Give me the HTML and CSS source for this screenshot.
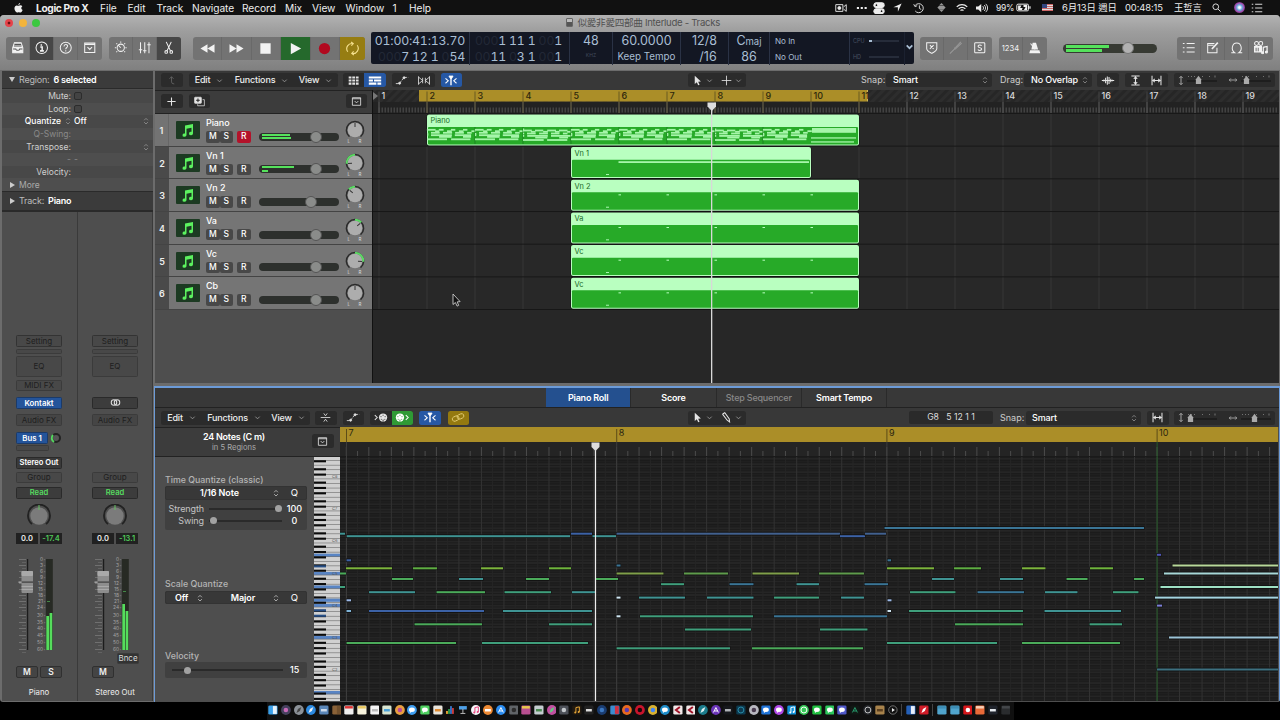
FILE: index.html
```html
<!DOCTYPE html>
<html lang="en">
<head>
  <meta charset="UTF-8">
  <meta name="viewport" content="width=device-width, initial-scale=1.0">
  <title>似愛非愛四部曲 Interlude - Tracks</title>
  <link rel="stylesheet" href="styles.css">
</head>
<body>

<!-- Icon sprite -->
<svg class="sprite" aria-hidden="true">
  <symbol id="i-apple" viewBox="0 0 14 16"><path fill="currentColor" d="M9.6 0c.1 1.500-1.200 3.200-2.800 3.300C6.600 1.800 8.100.2 9.600 0zM7.200 4.500C8 4.500 8.900 3.700 10.200 3.700c1.100 0 2.200.6 2.900 1.500-2.500 1.500-2.100 5 .5 6-.6 1.700-2 4.100-3.400 4.100-1 0-1.500-.7-2.800-.7s-1.800.7-2.800.7C2.600 15.300.5 11.500.5 8.500c0-3 1.900-4.700 3.800-4.700 1.200 0 2.200.7 2.900.7z"/></symbol>
  <symbol id="i-chev" viewBox="0 0 8 8"><path d="M1.500 3 4 5.500 6.500 3"/></symbol>
  <symbol id="i-updown" viewBox="0 0 8 10"><path d="M1.500 4 4 1.500 6.500 4M1.500 6.500 4 9l2.500-2.500"/></symbol>
  <symbol id="i-library" viewBox="0 0 16 16"><path fill="currentColor" d="M4 2h8l2 6v6H2V8z"/><path stroke="#555" d="M4 4h8M3.500 6h9M2.500 9.500h3.200c.5 2 4.100 2 4.600 0h3.200"/></symbol>
  <symbol id="i-info" viewBox="0 0 16 16"><circle cx="8" cy="8" r="6.800"/><path stroke-width="1.800" d="M6.300 7H8.500v4.500M6 11.700h4.500M7.500 3.800v1.700"/></symbol>
  <symbol id="i-help" viewBox="0 0 16 16"><circle cx="8" cy="8" r="6.500"/><path d="M5.900 6.500c0-3 4.500-2.900 4.300-.3C10 7.800 8 7.700 8 9.700M8 11v1.300"/></symbol>
  <symbol id="i-down" viewBox="0 0 16 16"><path d="M2 2.500h12v11H2zM2 4h12M5.300 7.300 8 10l2.700-2.700"/></symbol>
  <symbol id="i-dial" viewBox="0 0 16 16"><circle cx="8" cy="8" r="4.300"/><path d="m8 8-3-3M8 .5v1.500M1 8h1.500M13.500 8H15M2.800 2.800l1 1M13.200 2.800l-1 1M2.800 13.200l1-1M13.200 13.200l-1-1"/></symbol>
  <symbol id="i-mixer" viewBox="0 0 16 16"><path d="M3 1.500v13M8 1.500v13M13 1.500v13M1 10.500h4M6 11.500h4M11 4.500h4"/></symbol>
  <symbol id="i-cut" viewBox="0 0 16 16"><path d="M5 1l5 10.500M11 1 6 11.500"/><circle cx="5" cy="13" r="1.600"/><circle cx="11" cy="13" r="1.600"/></symbol>
  <symbol id="i-rew" viewBox="0 0 16 16"><path fill="currentColor" stroke="none" d="M8 3.500v9L.5 8zM15.500 3.500v9L8 8z"/></symbol>
  <symbol id="i-ff" viewBox="0 0 16 16"><path fill="currentColor" stroke="none" d="M.5 3.500v9L8 8zM8 3.500v9L15.500 8z"/></symbol>
  <symbol id="i-stop" viewBox="0 0 16 16"><path fill="currentColor" stroke="none" d="M2.500 2.500h11v11h-11z"/></symbol>
  <symbol id="i-play" viewBox="0 0 16 16"><path fill="currentColor" stroke="none" d="M3 2v12l11-6z"/></symbol>
  <symbol id="i-rec" viewBox="0 0 16 16"><circle cx="8" cy="8" r="6" fill="#b1091f" stroke="none"/></symbol>
  <symbol id="i-cycle" viewBox="0 0 16 16"><path d="M3 11.500A5.500 5.500 0 0 1 8.500 2.800M6.500 1l2.300 1.800L6.800 5M13 4.500a5.500 5.500 0 0 1-5.500 8.700M9.500 15l-2.300-1.800 2-2.200"/></symbol>
  <symbol id="i-shield" viewBox="0 0 16 16"><path d="M2 2h12v7c0 3-4 4.500-6 5.500C6 13.500 2 12 2 9zM5.800 5l4.400 4.400M10.200 5 5.800 9.400"/></symbol>
  <symbol id="i-fork" viewBox="0 0 16 16"><path d="M1 15l6-6M14 1 8.500 6.800c-1 1-2.500 1.200-1.500 2.200s1.500-.5 2.500-1.500L15 2.500"/></symbol>
  <symbol id="i-solo" viewBox="0 0 16 16"><rect x="2" y="2" width="12" height="12" rx="1"/><path d="M10.200 5.700c-1-1.500-4.200-1.200-4.200.5 0 2.300 4.300 1 4.300 3.400 0 1.900-3.600 2-4.500.4"/></symbol>
  <symbol id="i-metro" viewBox="0 0 16 16"><path fill="currentColor" stroke="none" d="M5.500 2h4L12 10H4zM2.500 11h11l1 3.500h-13z"/><path d="M8.500 10 3 3"/></symbol>
  <symbol id="i-list" viewBox="0 0 16 16"><path d="M5.500 3H15M5.500 8H15M5.500 13H15M1 3h2M1 8h2M1 13h2"/></symbol>
  <symbol id="i-note" viewBox="0 0 16 16"><path d="M13 8v6H2V3h8M2 5h7"/><path stroke-width="2" d="m7 9.500 7-7.500"/></symbol>
  <symbol id="i-loop" viewBox="0 0 16 16"><path d="M1.500 14h4.300C.5 10.500 2.500 2.300 8 2.300S15.500 10.500 10.200 14h4.300"/></symbol>
  <symbol id="i-media" viewBox="0 0 18 16"><circle cx="4" cy="3" r="2.300"/><circle cx="9" cy="3" r="2.300"/><path fill="currentColor" stroke="none" d="M1 6h9.500v7.500H1z"/><path stroke="#737373" d="M3.500 8v4M6 8v4"/><path stroke-width="1.500" d="M12 14V7.500l4.500-1V13"/><circle cx="11.200" cy="14" r="1.200" fill="currentColor"/><circle cx="15.700" cy="13" r="1.200" fill="currentColor"/></symbol>
  <symbol id="i-up" viewBox="0 0 16 16"><path d="M5 5.500 8 2.500l3 3M8 2.500V10q0 3 4 3"/></symbol>
  <symbol id="i-grid" viewBox="0 0 16 16"><path fill="currentColor" stroke="none" d="M1 2h4v3H1zM6.200 2h4v3h-4zM11.400 2h4v3h-4zM1 6.500h4v3H1zM6.200 6.500h4v3h-4zM11.400 6.500h4v3h-4zM1 11h4v3H1zM6.200 11h4v3h-4zM11.400 11h4v3h-4z"/></symbol>
  <symbol id="i-lanes" viewBox="0 0 20 16"><path fill="currentColor" stroke="none" d="M1 2h18v3H1zM1 6.500h6v3H1zM8.500 6.500H19v3H8.500zM1 11h11v3H1zM13.500 11H19v3h-5.500z"/></symbol>
  <symbol id="i-auto" viewBox="0 0 20 16"><path d="M1 12.500h5l7-9h6" stroke-dasharray="4 1.500"/><circle cx="6.500" cy="12" r="1.500" fill="currentColor"/><circle cx="13" cy="4" r="1.500" fill="currentColor"/></symbol>
  <symbol id="i-flex" viewBox="0 0 20 16"><path d="M2 2v12M18 2v12M2 3l6 5-6 5M18 3l-6 5 6 5M8 4v8M12 4v8"/></symbol>
  <symbol id="i-catch" viewBox="0 0 20 16"><path stroke-width="1.500" d="m2 5 4 3.500L2 12M18 5l-4 3.500 4 3.500"/><path stroke-width="2" d="M10 3v12"/><path fill="currentColor" d="M7 1.500h6L11 5H9z"/></symbol>
  <symbol id="i-arrow" viewBox="0 0 16 16"><path fill="currentColor" stroke="none" d="M4 1v12l3-2.500 2 4.500 2-1-2-4.200 4-.3z"/></symbol>
  <symbol id="i-cross" viewBox="0 0 16 16"><path d="M8 1v14M1 8h14"/></symbol>
  <symbol id="i-pencil" viewBox="0 0 16 16"><path stroke-width="1.500" d="M3 2.500 5.500 1l6.500 9 .5 4.500L9 12 2.500 3.500z"/></symbol>
  <symbol id="i-plus" viewBox="0 0 16 16"><path stroke-width="1.600" d="M8 2v12M2 8h12"/></symbol>
  <symbol id="i-dup" viewBox="0 0 18 16"><rect x="1" y="1" width="11" height="10" rx="1" fill="currentColor"/><path d="M14 5h3v10H6v-2.500"/><path stroke="#222" stroke-width="1.600" d="M6.500 3v6M3.500 6h6"/></symbol>
  <symbol id="i-wave" viewBox="0 0 20 16"><path stroke-width="1.500" d="M1 8h18M4 6.500v3M6.500 4v8M9 2v12M11.500 3v10M14 5.500v5M16.500 7v2"/></symbol>
  <symbol id="i-vfit" viewBox="0 0 16 16"><path stroke-width="1.500" d="M2 1.500h12M2 14.500h12M8 3v10M5.500 5.500 8 3l2.500 2.500M5.500 10.500 8 13l2.500-2.500"/></symbol>
  <symbol id="i-hfit" viewBox="0 0 16 16"><path stroke-width="1.500" d="M1.500 1v14M14.500 1v14M3 8h10M5.500 5.500 3 8l2.500 2.500M10.500 5.500 13 8l-2.500 2.500"/></symbol>
  <symbol id="i-v" viewBox="0 0 8 16"><path stroke-width="1.400" d="M4 2v12M1.500 4.500 4 2l2.500 2.500M1.500 11.500 4 14l2.500-2.500"/></symbol>
  <symbol id="i-h" viewBox="0 0 16 8"><path stroke-width="1.400" d="M2 4h12M4.500 1.500 2 4l2.500 2.500M11.500 1.500 14 4l-2.500 2.500"/></symbol>
  <symbol id="i-zoomer" viewBox="0 0 30 12"><path stroke="#1b1b1b" stroke-width="1.500" d="M0 7h30"/><path stroke="#888" stroke-width=".8" d="M1 2.500h1M4 2.500h1M7 2.500h1M15 2.500h1M22 2.500h1M28 1.500v2"/></symbol>
  <symbol id="i-thumb" viewBox="0 0 8 10"><path fill="#aaa" stroke="none" d="M4 0 7 4v5.500H1V4z"/></symbol>
  <symbol id="i-collapse" viewBox="0 0 16 16"><path d="M1 8h14M5.500 2 8 5.500 10.500 2M5.500 14 8 10.500l2.500 3.500"/></symbol>
  <symbol id="i-midiin" viewBox="0 0 20 16"><path stroke-width="1.500" d="m1 4.500 3.500 3.500L1 11.500"/><circle cx="13" cy="8" r="6" fill="currentColor" stroke="none"/><path stroke="#222" d="M13 4v1.500M10 6v1.500M16 6v1.500M10.500 10v1.300M15.500 10v1.300M13 11v3"/></symbol>
  <symbol id="i-midiout" viewBox="0 0 20 16"><path stroke-width="1.500" d="m15.500 4.500 3.500 3.500-3.500 3.500"/><circle cx="7" cy="8" r="6" fill="currentColor" stroke="none"/><path stroke="#2a8a30" d="M7 4v1.500M4 6v1.500M10 6v1.500M4.500 10v1.300M9.500 10v1.300M7 11v3"/></symbol>
  <symbol id="i-link" viewBox="0 0 20 16"><rect x="1.500" y="6.500" width="10" height="6.500" rx="3.200" transform="rotate(-25 6 9.500)"/><rect x="8.500" y="3" width="10" height="6.500" rx="3.200" transform="rotate(-25 14 6)"/></symbol>
  <symbol id="i-rings" viewBox="0 0 16 10"><circle cx="5.800" cy="5" r="4"/><circle cx="10.200" cy="5" r="4"/></symbol>
  <symbol id="i-music" viewBox="0 0 24 18"><path fill="#5cf25f" d="M9 4.500 17 3v9.500a2 1.700 0 1 1-1.500-1.700V6.700l-5 1v6.400a2 1.700 0 1 1-1.500-1.600z"/></symbol>
  <!-- menu bar extras -->
  <symbol id="i-cam" viewBox="0 0 16 12"><path d="M1 1.500h9.500v9H1zM11.500 4.500 15 1.500v9l-3.500-3"/><circle cx="5.800" cy="6" r="2" fill="currentColor"/></symbol>
  <symbol id="i-dots" viewBox="0 0 14 4"><path fill="currentColor" stroke="none" d="M1 1h2.500v2.500H1zM5.500 1H8v2.500H5.500zM10 1h2.500v2.500H10z"/></symbol>
  <symbol id="i-toggles" viewBox="0 0 14 14"><rect x="1" y="1" width="12" height="5.500" rx="2.700" fill="currentColor"/><rect x="1" y="8" width="12" height="5.500" rx="2.700" fill="currentColor"/><circle cx="4" cy="3.700" r="1.600" fill="#111"/><circle cx="10" cy="10.700" r="1.600" fill="#111"/></symbol>
  <symbol id="i-loc" viewBox="0 0 12 12"><path fill="currentColor" stroke="none" d="M11.500.5 6.500 11.500V5.500H.5z"/></symbol>
  <symbol id="i-tm" viewBox="0 0 16 14"><path d="M3 3.500A6 6 0 1 1 3 11M1 2l1.500 3 3-1M8.500 3.500V7.500l2.500 1.500"/></symbol>
  <symbol id="i-drop" viewBox="0 0 12 12"><path fill="currentColor" stroke="none" d="m6 0 3 3H3zM3 3.500h6L11.500 6 9 8.500H3L.5 6zM3 9h6l-3 3z"/></symbol>
  <symbol id="i-wifi" viewBox="0 0 16 12"><path stroke-width="1.700" d="M1 4.500c4-4 10-4 14 0M3.500 7c3-2.500 6-2.500 9 0M6 9.300c1.500-1 2.500-1 4 0"/></symbol>
  <symbol id="i-vol" viewBox="0 0 16 12"><path fill="currentColor" stroke="none" d="M0 4h3l4-3.500v11L3 8H0z"/><path d="M9 3.500c1.300 1.500 1.300 3.500 0 5M11 2c2.300 2.500 2.300 5.500 0 8M13 .5c3.300 3.500 3.300 7.500 0 11"/></symbol>
  <symbol id="i-batt" viewBox="0 0 18 10"><rect x="1" y="1" width="14" height="8" rx="1.500"/><path fill="currentColor" stroke="none" d="M2.500 2.500h4L5 5.500h3L7 8H2.500zM9 2h4.500v6H9.500l2-3.500H9zM16 3.500h1.500v3H16z"/></symbol>
  <symbol id="i-search" viewBox="0 0 12 12"><circle cx="5" cy="5" r="3.800"/><path d="m8 8 3.500 3.500"/></symbol>
</svg>

<!-- Menu bar -->
<div id="menubar">
  <svg class="apple"><use href="#i-apple"/></svg>
  <div class="menus">
    <b>Logic Pro X</b><span>File</span><span>Edit</span><span>Track</span><span>Navigate</span><span>Record</span><span>Mix</span><span>View</span><span>Window</span><span>1</span><span>Help</span>
  </div>
  <div class="extras">
    <svg class="ic"><use href="#i-cam"/></svg>
    <svg class="ic dots"><use href="#i-dots"/></svg>
    <svg class="ic"><use href="#i-toggles"/></svg>
    <svg class="ic loc"><use href="#i-loc"/></svg>
    <svg class="ic"><use href="#i-tm"/></svg>
    <svg class="ic loc dim"><use href="#i-drop"/></svg>
    <svg class="ic"><use href="#i-wifi"/></svg>
    <svg class="ic"><use href="#i-vol"/></svg>
    <span class="pct">99%</span>
    <svg class="ic batt"><use href="#i-batt"/></svg>
    <i class="flag"></i>
    <span>6月13日 週日</span>
    <span>00:48:15</span>
    <span>王哲言</span>
    <svg class="ic loc"><use href="#i-search"/></svg>
    <i class="siri"></i>
    <svg class="ic"><use href="#i-list"/></svg>
  </div>
</div>

<div id="window">

  <!-- Title bar and control bar -->
  <header id="control-bar">
    <div class="titlebar">
      <i class="light red"></i><i class="light yellow"></i><i class="light green"></i>
      <div class="doc-title"><i class="doc"></i>似愛非愛四部曲 Interlude - Tracks</div>
    </div>
    <div class="controls">
      <div class="group lib">
        <button><svg class="ic"><use href="#i-library"/></svg></button>
        <button class="on"><svg class="ic"><use href="#i-info"/></svg></button>
        <button><svg class="ic"><use href="#i-help"/></svg></button>
        <button><svg class="ic"><use href="#i-down"/></svg></button>
      </div>
      <div class="group smart">
        <button><svg class="ic"><use href="#i-dial"/></svg></button>
        <button><svg class="ic"><use href="#i-mixer"/></svg></button>
        <button class="on"><svg class="ic"><use href="#i-cut"/></svg></button>
      </div>
      <div class="group transport">
        <button><svg class="ic"><use href="#i-rew"/></svg></button>
        <button><svg class="ic"><use href="#i-ff"/></svg></button>
        <button><svg class="ic"><use href="#i-stop"/></svg></button>
        <button class="play"><svg class="ic"><use href="#i-play"/></svg></button>
        <button><svg class="ic"><use href="#i-rec"/></svg></button>
        <button class="cycle"><svg class="ic"><use href="#i-cycle"/></svg></button>
      </div>
      <div id="lcd">
        <div class="right"><p>01:00:41:13.70</p><p><s>000</s>7 12 1 <s>0</s>54</p></div>
        <div class="right"><p><s>000</s>1 11 1 <s>00</s>1</p><p><s>00</s>11 <s>0</s>3 1 <s>00</s>1</p></div>
        <div><p>48</p><p class="tiny">KHZ</p></div>
        <div><p>60.0000</p><p class="keep">Keep Tempo</p></div>
        <div><p>12/8</p><p>&nbsp; /16</p></div>
        <div><p>C<small>maj</small></p><p>86</p></div>
        <div class="io"><p>No In</p><p>No Out</p></div>
        <div class="load"><p>CPU<i class="cpu"></i></p><p>HD<i></i></p></div>
        <div class="more"><svg class="ic"><use href="#i-chev"/></svg></div>
      </div>
      <div class="group three">
        <button><svg class="ic"><use href="#i-shield"/></svg></button>
        <button class="faded"><svg class="ic"><use href="#i-fork"/></svg></button>
        <button><svg class="ic"><use href="#i-solo"/></svg></button>
      </div>
      <div class="group pair">
        <button>1234</button>
        <button><svg class="ic"><use href="#i-metro"/></svg></button>
      </div>
      <div class="master"><i class="bar a"></i><i class="bar b"></i><i class="knob"></i></div>
      <div class="group four">
        <button><svg class="ic"><use href="#i-list"/></svg></button>
        <button><svg class="ic"><use href="#i-note"/></svg></button>
        <button><svg class="ic"><use href="#i-loop"/></svg></button>
        <button><svg class="ic media"><use href="#i-media"/></svg></button>
      </div>
    </div>
  </header>

  <div id="main">

    <!-- Inspector -->
    <aside id="inspector">
      <div class="section-head"><i class="tri open"></i>Region: <b>6 selected</b></div>
      <dl class="params">
        <div><dt>Mute:</dt><dd><i class="check"></i></dd></div>
        <div><dt>Loop:</dt><dd><i class="check"></i></dd></div>
        <div class="lit"><dt>Quantize <svg class="ud"><use href="#i-updown"/></svg></dt><dd>Off</dd><svg class="ud end"><use href="#i-updown"/></svg></div>
        <div class="off"><dt>Q-Swing:</dt><dd></dd></div>
        <div><dt>Transpose:</dt><dd></dd><svg class="ud end"><use href="#i-updown"/></svg></div>
        <div class="off"><dt>-</dt><dd>-</dd></div>
        <div><dt>Velocity:</dt><dd></dd></div>
      </dl>
      <div class="more-row"><i class="tri"></i>More</div>
      <div class="section-head lower"><i class="tri"></i>Track: <b>Piano</b></div>
      <div class="strips">
        <div class="strip">
          <div class="slot setting">Setting</div>
          <div class="slot blank b1"></div>
          <div class="slot eq">EQ</div>
          <div class="slot midi">MIDI FX</div>
          <div class="slot inst blue">Kontakt</div>
          <div class="slot fx">Audio FX</div>
          <div class="bus"><div class="slot blue">Bus 1</div><svg class="send" viewBox="0 0 12 12"><circle cx="6" cy="6" r="4" fill="#555" stroke="#222" stroke-width="2"/><path d="M4 10a4.500 4.500 0 0 1-1-7" stroke="#55d860" stroke-width="2" fill="none"/></svg></div>
          <div class="slot blank b2"></div>
          <div class="slot out bright">Stereo Out</div>
          <div class="slot grp">Group</div>
          <div class="slot read">Read</div>
          <svg class="pan" viewBox="0 0 24 24"><path d="M5 20a11 11 0 1 1 14 0" fill="none" stroke="#222" stroke-width="1.800"/><circle cx="12" cy="12" r="8.700" fill="#7b7b7b"/><path d="M12 1v5" stroke="#62c05f"/></svg>
          <div class="vals"><b>0.0</b><b class="g">-17.4</b></div>
          <svg class="fader" viewBox="0 0 46 94" data-l="60" data-r="57" data-peak="43"></svg>
          <div class="ms"><b>M</b><b>S</b></div>
          <div class="name">Piano</div>
        </div>
        <div class="strip">
          <div class="slot setting">Setting</div>
          <div class="slot blank b1"></div>
          <div class="slot eq">EQ</div>
          <div class="slot inst"><svg class="rings"><use href="#i-rings"/></svg></div>
          <div class="slot fx">Audio FX</div>
          <div class="slot grp">Group</div>
          <div class="slot read">Read</div>
          <svg class="pan" viewBox="0 0 24 24"><path d="M5 20a11 11 0 1 1 14 0" fill="none" stroke="#222" stroke-width="1.800"/><circle cx="12" cy="12" r="8.700" fill="#7b7b7b"/><path d="M12 1v5" stroke="#62c05f"/></svg>
          <div class="vals"><b>0.0</b><b class="g">-13.1</b></div>
          <svg class="fader" viewBox="0 0 46 94" data-l="48" data-r="55" data-peak="33"></svg>
          <div class="slot bnce">Bnce</div>
          <div class="ms"><b>M</b></div>
          <div class="name">Stereo Out</div>
        </div>
      </div>
    </aside>

    <div id="panes">

      <!-- Tracks area -->
      <section id="tracks">
        <div class="toolbar">
          <div class="btns back"><span><svg class="ic"><use href="#i-up"/></svg></span></div>
          <div class="btns menu"><span>Edit<svg class="ch"><use href="#i-chev"/></svg></span><span>Functions<svg class="ch"><use href="#i-chev"/></svg></span><span>View<svg class="ch"><use href="#i-chev"/></svg></span></div>
          <div class="btns"><span><svg class="ic"><use href="#i-grid"/></svg></span><span class="blue"><svg class="ic wide"><use href="#i-lanes"/></svg></span></div>
          <div class="btns"><span><svg class="ic wide"><use href="#i-auto"/></svg></span><span><svg class="ic wide"><use href="#i-flex"/></svg></span></div>
          <div class="btns"><span class="blue"><svg class="ic wide"><use href="#i-catch"/></svg></span></div>
          <div class="btns tools"><span><svg class="ic"><use href="#i-arrow"/></svg><svg class="ch"><use href="#i-chev"/></svg></span><span><svg class="ic"><use href="#i-cross"/></svg><svg class="ch"><use href="#i-chev"/></svg></span></div>
          <label class="snap">Snap:</label>
          <div class="select s1">Smart<svg class="ud"><use href="#i-updown"/></svg></div>
          <label class="drag">Drag:</label>
          <div class="select s2">No Overlap<svg class="ud"><use href="#i-updown"/></svg></div>
          <div class="btns wavebtn"><span><svg class="ic wide"><use href="#i-wave"/></svg></span></div>
          <div class="btns"><span><svg class="ic"><use href="#i-vfit"/></svg></span><span><svg class="ic"><use href="#i-hfit"/></svg></span></div>
          <div class="zoomers"><div><svg class="v"><use href="#i-v"/></svg><svg class="z"><use href="#i-zoomer"/><use href="#i-thumb" x="8" y="1" width="7" height="10"/></svg></div><div><svg class="h"><use href="#i-h"/></svg><svg class="z"><use href="#i-zoomer"/><use href="#i-thumb" x="2" y="1" width="7" height="10"/></svg></div></div>
        </div>
        <div class="arrange">
          <div class="heads">
            <div class="heads-bar">
              <div class="btns"><span><svg class="ic"><use href="#i-plus"/></svg></span></div>
              <div class="btns"><span><svg class="ic"><use href="#i-dup"/></svg></span></div>
              <div class="btns last"><span><svg class="ic"><use href="#i-down"/></svg></span></div>
            </div>
            <div id="track-list"></div>
          </div>
          <svg id="arrange" viewBox="373 90 906 293"></svg>
        </div>
      </section>

      <!-- Editor -->
      <section id="editor">
        <nav class="tabs"><span class="active">Piano Roll</span><span>Score</span><span class="off">Step Sequencer</span><span>Smart Tempo</span></nav>
        <div class="toolbar">
          <div class="btns menu"><span>Edit<svg class="ch"><use href="#i-chev"/></svg></span><span>Functions<svg class="ch"><use href="#i-chev"/></svg></span><span>View<svg class="ch"><use href="#i-chev"/></svg></span></div>
          <div class="btns"><span><svg class="ic"><use href="#i-collapse"/></svg></span></div>
          <div class="btns"><span><svg class="ic wide"><use href="#i-auto"/></svg></span></div>
          <div class="btns"><span><svg class="ic wide"><use href="#i-midiin"/></svg></span><span class="green"><svg class="ic wide"><use href="#i-midiout"/></svg></span></div>
          <div class="btns"><span class="blue"><svg class="ic wide"><use href="#i-catch"/></svg></span></div>
          <div class="btns gold-btn"><span class="gold"><svg class="ic wide"><use href="#i-link"/></svg></span></div>
          <div class="btns tools"><span><svg class="ic"><use href="#i-arrow"/></svg><svg class="ch"><use href="#i-chev"/></svg></span><span><svg class="ic"><use href="#i-pencil"/></svg><svg class="ch"><use href="#i-chev"/></svg></span></div>
          <div class="info">G8 &nbsp; 5 12 1 1</div>
          <label class="snap">Snap:</label>
          <div class="select s1">Smart<svg class="ud"><use href="#i-updown"/></svg></div>
          <div class="btns"><span><svg class="ic"><use href="#i-hfit"/></svg></span></div>
          <div class="zoomers"><div><svg class="v"><use href="#i-v"/></svg><svg class="z"><use href="#i-zoomer"/><use href="#i-thumb" x="0" y="1" width="7" height="10"/></svg></div><div><svg class="h"><use href="#i-h"/></svg><svg class="z"><use href="#i-zoomer"/><use href="#i-thumb" x="10" y="1" width="7" height="10"/></svg></div></div>
        </div>
        <div class="roll">
          <div class="side">
            <div class="side-head">
              <div class="notes-info"><b>24 Notes (C m)</b><span>in 5 Regions</span></div>
              <div class="btns"><span><svg class="ic"><use href="#i-down"/></svg></span></div>
            </div>
            <div class="side-body">
              <div class="quant">
                <h4>Time Quantize (classic)</h4>
                <div class="box time">
                  <div class="pick"><b>1/16 Note</b><svg class="ud"><use href="#i-updown"/></svg><span>Q</span></div>
                  <div class="row"><span>Strength</span><i class="slider full"></i><b>100</b></div>
                  <div class="row"><span>Swing</span><i class="slider zero"></i><b>0</b></div>
                </div>
                <h4 class="scale">Scale Quantize</h4>
                <div class="box">
                  <div class="pick scale-pick"><b>Off</b><svg class="ud"><use href="#i-updown"/></svg><b>Major</b><svg class="ud"><use href="#i-updown"/></svg><span>Q</span></div>
                </div>
                <h4 class="vel">Velocity</h4>
                <div class="box velbox"><i class="slider"></i><b>15</b></div>
              </div>
              <svg id="keys" viewBox="314 457 26 244"></svg>
            </div>
          </div>
          <svg id="roll" viewBox="340 427 938 274"></svg>
        </div>
      </section>
    </div>
  </div>
</div>

<div id="dock"></div>

<script src="script.js"></script>
</body>
</html>
```
FILE: styles.css
```css
* {
  box-sizing: border-box;
}

body {
  margin: 0;
  width: 1280px;
  height: 720px;
  overflow: hidden;
  background: #000;
  color: #e4e4e4;
  font-family: Inter, "Noto Sans CJK TC", sans-serif;
  font-size: 9px;
  line-height: 12px;
}

p, h4, dl, dd {
  margin: 0;
}

svg {
  display: block;
  fill: none;
  stroke: currentColor;
  flex: none;
}

svg text {
  stroke: none;
}

.sprite {
  display: none;
}

.ic {
  width: 12px;
  height: 12px;
  stroke-width: 1.2;
}

.ic.wide {
  width: 15px;
}

/* Menu bar */
#menubar {
  display: flex;
  align-items: center;
  height: 15px;
  background: #111;
  color: #eee;
  font-size: 10.2px;
}

.apple {
  width: 9px;
  height: 10px;
  margin-left: 14px;
  stroke: none;
}

.menus {
  display: grid;
  grid-template-columns: 64px 27.5px 29px 35.5px 50px 43px 27px 33.5px 47px 16.5px 30px;
  margin-left: 13px;
}

.menus b {
  letter-spacing: -0.35px;
}

.menus span {
  letter-spacing: -0.05px;
}

.extras {
  display: grid;
  grid-template-columns: 21px 16.5px 20px 20px 24.5px 18.5px 20px 20.5px 19.5px 26px 20.5px 63px 49px 38px 22px 17px 14px;
  align-items: center;
  margin-left: auto;
  margin-right: 15px;
  white-space: nowrap;
  font-size: 9.4px;
  letter-spacing: -0.1px;
}

.extras .loc {
  width: 9px;
  height: 9px;
}

.extras .dots {
  height: 3.5px;
}

.extras .pct {
  font-size: 8.5px;
  letter-spacing: -0.3px;
}

.extras .batt {
  width: 15px;
  height: 9px;
}

.dim {
  opacity: 0.6;
}

.flag {
  width: 11px;
  height: 7px;
  background: linear-gradient(#33477f, #33477f) 0 0 / 5px 4px no-repeat, repeating-linear-gradient(#c66 0 1px, #ddd 1px 2px);
}

.siri {
  width: 11px;
  height: 11px;
  border-radius: 50%;
  background: radial-gradient(#fff 10%, #6ad 35%, #a4a 60%, #335 80%);
}

/* Window */
#window {
  height: 687px;
  background: #6c6c6c;
  border-radius: 4px 4px 3px 3px;
  overflow: hidden;
}

#control-bar {
  height: 55px;
  background: linear-gradient(#b2b2b2, #9d9d9d 30%, #808080);
}

.titlebar {
  display: flex;
  align-items: center;
  height: 15px;
  padding-left: 5px;
}

.light {
  width: 8px;
  height: 8px;
  margin-right: 5.5px;
  border-radius: 50%;
}

.red { background: radial-gradient(#611 20%, #e5434a 30%); }
.yellow { background: #f3b43c; }
.green { background: #3cc840; }

.doc-title {
  display: flex;
  align-items: center;
  margin-left: 520px;
  font-size: 9.6px;
  color: #505050;
  letter-spacing: -0.3px;
}

.doc {
  width: 7px;
  height: 9px;
  margin-right: 5px;
  border: 1px solid #666;
  border-radius: 1px;
  background: linear-gradient(#bbb 50%, #555 50%);
}

.controls {
  display: flex;
  align-items: center;
  height: 36px;
  padding-left: 6px;
}

.group {
  display: flex;
  height: 23px;
  border-radius: 3px;
  overflow: hidden;
  background: #737373;
}

.group button {
  display: flex;
  align-items: center;
  justify-content: center;
  width: 24px;
  padding: 0;
  border: 0;
  border-right: 1px solid #696969;
  background: none;
  color: #f2f2f2;
  font: 7.6px Inter, sans-serif;
}

.group button:last-child { border-right: 0; }
.group .ic { width: 13.5px; height: 13.5px; }
.group .media { width: 15.5px; }
.group .on { background: #474747; }
.group .faded { color: #999; }
.smart { margin-left: 7px; }
.transport { margin-left: 12px; }
.transport button { width: 29.4px; }
.transport button:last-child { width: 25px; }
.transport .ic { width: 15px; height: 15px; }
.group .play { background: #25692c; }
.group .cycle { background: #967d12; color: #f5e08c; }
.three { margin-left: 6px; }
.pair { margin-left: 7px; }
.four { margin-left: 20px; }

#lcd {
  display: grid;
  grid-template-columns: 99px 100px 43px 68px 48px 41px 80px 55px 9px;
  width: 543px;
  height: 32px;
  margin-left: 6px;
  border-radius: 2px;
  background: #131723;
  color: #a9bed3;
  font-size: 12.5px;
  text-align: center;
}

#lcd > div {
  padding-top: 1px;
  border-right: 1px solid #2a3245;
  white-space: nowrap;
}

#lcd > .more { border: 0; padding: 10px 0 0; }
#lcd p { height: 16px; line-height: 16px; }
#lcd .right { padding-right: 4px; font-size: 12.3px; font-variant-numeric: tabular-nums; letter-spacing: -0.2px; text-align: right; }
#lcd .right + .right { padding-right: 7px; }
#lcd s { color: #222836; text-decoration: none; }
#lcd small { font-size: 9.5px; }
#lcd p.tiny { font-size: 5px; color: #414a5c; line-height: 12px; }
#lcd p.keep { font-size: 9.8px; }
#lcd .io { text-align: left; padding-left: 5px; font-size: 8.1px; }
#lcd .load { text-align: left; padding-left: 3px; font-size: 5.5px; color: #485062; border-right-color: #1b2130; }
#lcd .load p { display: flex; align-items: center; justify-content: space-between; padding-right: 5px; }
.load i { width: 30px; height: 2px; background: #262c3a; }
.load .cpu { background: linear-gradient(90deg, #a9bed3 3px, #262c3a 3px); }
.more .ic { width: 9px; height: 9px; stroke-width: 1.5; }

.master {
  position: relative;
  width: 94px;
  height: 9px;
  margin-left: 16px;
  border-radius: 5px;
  background: #373a33;
}

.master i { position: absolute; }
.master .bar { left: 3px; height: 2.5px; background: #55e25c; }
.master .a { top: 1.5px; width: 43px; }
.master .b { top: 5.5px; width: 36px; }
.master .knob { left: 59px; top: -2px; width: 12px; height: 12px; border: 1px solid #777; border-radius: 50%; background: #b1b1b1; }

#main {
  display: flex;
  height: 632px;
}

/* Inspector */
#inspector {
  width: 151px;
  margin: 1px 2px 1px 2px;
  background: #4e4e4e;
  color: #cfcfcf;
  font-size: 8.5px;
}

.section-head {
  display: flex;
  align-items: center;
  gap: 4px;
  height: 18px;
  padding-left: 7px;
  border-bottom: 1px solid #2a2a2a;
  background: #3b3b3b;
  font-size: 9px;
  color: #bbb;
  letter-spacing: -0.22px;
}

.section-head b { color: #fff; font-weight: 600; }
.section-head.lower { height: 20px; padding-left: 8px; border-top: 1px solid #2a2a2a; }

.tri {
  width: 0;
  height: 0;
  border: 3.5px solid transparent;
  border-left: 5px solid #ccc;
  border-right: 0;
}

.tri.open {
  border: 3.5px solid transparent;
  border-top: 5.5px solid #ccc;
  border-bottom: 0;
}

.params {
  padding-top: 1px;
}

.params div {
  display: flex;
  align-items: center;
  height: 12.6px;
}

.params div:nth-child(odd) { background: #484848; }
.params dt { display: flex; align-items: center; justify-content: flex-end; width: 69px; margin-right: 3px; }
.params .lit { color: #fff; font-weight: 500; }
.params .lit dt { gap: 4px; }
.params .off { color: #8a8a8a; }

.ud {
  width: 6px;
  height: 8px;
  color: #999;
}

.ud.end { margin: 0 4px 0 auto; }

.check {
  display: block;
  width: 8px;
  height: 8px;
  border: 1px solid #2c2c2c;
  border-radius: 2px;
  background: #434343;
}

.more-row {
  display: flex;
  align-items: center;
  gap: 4px;
  height: 12.8px;
  padding-left: 8px;
  color: #aaa;
}

.strips {
  display: grid;
  grid-template-columns: 76px 75px;
  height: 490px;
  border-top: 1px solid #2a2a2a;
}

.strip {
  display: grid;
  grid-template-columns: 46px;
  grid-template-rows: [setting] 12px 2px [b1] 5px 2px [eq] 21px 3px [midi] 11px 6px [inst] 12px 5px [fx] 12px 6px [bus] 12px 1px [b2] 6px 6px [out] 12px 3px [grp] 11px 4px [read] 12px 5px [pan] 24px 5px [vals] 11px 14px [fader] 94px 1px [bnce] 11px 2px [ms] 12px 8px [name] 12px;
  padding: 123px 0 0 14px;
  border-right: 1px solid #3a3a3a;
}

.slot {
  display: flex;
  align-items: center;
  justify-content: center;
  border: 1px solid #3b3b3b;
  border-radius: 1.5px;
  background: #484848;
  color: #1e1e1e;
  font-size: 8px;
}

.setting { grid-row: setting; border-color: #333; }
.b1 { grid-row: b1; }
.eq { grid-row: eq; }
.midi { grid-row: midi; }
.inst { grid-row: inst; background: #3c3c3c; border-color: #2a2a2a; }
.fx { grid-row: fx; background: #454545; }
.bus { grid-row: bus; display: flex; gap: 2px; }
.bus .slot { width: 33px; }
.b2 { grid-row: b2; width: 33px; }
.out { grid-row: out; }
.grp { grid-row: grp; }
.read { grid-row: read; }
.pan { grid-row: pan; width: 24px; margin-left: 11px; stroke: none; }
.vals { grid-row: vals; }
.fader { grid-row: fader; width: 46px; height: 94px; overflow: visible; stroke: none; }
.bnce { grid-row: bnce; width: 22px; margin-left: 25px; }
.ms { grid-row: ms; }
.name { grid-row: name; text-align: center; color: #eee; font-size: 7.8px; margin: 0 -8px; }
.send { width: 12px; height: 12px; }
.rings { width: 11px; height: 7px; color: #ddd; stroke-width: 1.5; }

.slot.blue { background: #24549a; border-color: #1b3a68; color: #fff; font-size: 7.8px; font-weight: 600; }
.slot.bright { background: #3a3a3a; border-color: #2a2a2a; color: #fff; font-weight: 600; font-size: 7.6px; white-space: nowrap; }
.slot.read { background: #3c3c3c; border-color: #2a2a2a; color: #57dd60; font-size: 7.6px; font-weight: 600; }
.slot.bnce { background: #333; color: #ddd; }

.vals,
.ms {
  display: flex;
  gap: 2px;
}

.vals b,
.ms b {
  width: 22px;
  background: #212121;
  color: #eee;
  font-size: 7.5px;
  font-weight: 600;
  line-height: 11px;
  text-align: center;
}

.vals .g { color: #4fc758; }

.ms b {
  border: 1px solid #303030;
  border-radius: 2px;
  background: #444;
  font-size: 8.5px;
  line-height: 10px;
}

/* Panes */
#panes {
  width: 1126px;
}

#tracks {
  height: 312px;
  margin: 1px 1px 0 0;
  overflow: hidden;
  background: #4e4e4e;
}

.toolbar {
  display: flex;
  align-items: center;
  height: 19px;
  padding-left: 6px;
  background: #383838;
}

.btns {
  display: flex;
  height: 14px;
  margin-right: 6px;
  border-radius: 2.5px;
  background: #2b2b2b;
  overflow: hidden;
}

.btns > span {
  display: flex;
  align-items: center;
  justify-content: center;
  width: 21.5px;
}

.btns .ic { width: 11px; height: 11px; }
.btns .ic.wide { width: 14px; }
.btns .ch { width: 7px; height: 7px; color: #999; }
.back { color: #666; }
.menu > span { gap: 6px; width: 44px; color: #eee; font-weight: 500; letter-spacing: -0.15px; }
.menu > span:first-child { width: 41px; }
.menu > span:nth-child(2) { width: 64px; }
.btns .blue { background: #2658a5; color: #fff; }
.btns .green { background: #2f9a35; color: #fff; }
.btns .gold { background: #94790f; color: #e8d27a; }
.tools > span { width: 29px; gap: 3px; }
#tracks .tools { margin-left: 220px; }
#tracks .toolbar { padding-bottom: 1px; }
#tracks .menu { margin-right: 5px; }

.toolbar label { color: #ccc; width: 26px; }

.select {
  display: flex;
  align-items: center;
  justify-content: space-between;
  height: 14px;
  padding: 0 4px 0 7px;
  border-radius: 2.5px;
  background: #2b2b2b;
  color: #fff;
  font-weight: 500;
  white-space: nowrap;
  letter-spacing: -0.15px;
}

#tracks .snap { margin-left: 109px; width: 25px; }
#tracks .s1 { width: 106px; }
#tracks .drag { margin-left: 8px; width: 24px; }
#tracks .s2 { width: 68px; margin-right: 5px; }

.zoomers {
  display: flex;
  width: 101px;
  height: 14px;
  border-radius: 2.5px;
  background: #2b2b2b;
  color: #aaa;
}

.zoomers div { display: flex; align-items: center; gap: 3px; width: 50px; padding-left: 4px; }
.zoomers .v { width: 6px; height: 11px; }
.zoomers .h { width: 10px; height: 6px; }
.zoomers .z { width: 30px; height: 12px; }

.arrange {
  display: flex;
}

.heads {
  width: 218px;
  border-right: 1px solid #111;
}

.heads-bar {
  display: flex;
  align-items: center;
  height: 24px;
  padding: 0 5px 2px 6px;
  border-top: 1px solid #222;
  border-bottom: 1px solid #222;
  background: #3c3c3c;
}

.heads-bar .last { margin: 0 0 0 auto; }

.track-row {
  display: flex;
  height: 32.67px;
  border-bottom: 1px solid #444;
  background: #757575;
}

.track-row .num {
  width: 14px;
  background: #4a4a4a;
  color: #eee;
  font-weight: 600;
  line-height: 33px;
  text-align: center;
}

.track-row.sel .num { background: #737373; border-right: 1px solid #666; }
.track-row .badge { width: 24px; height: 18px; margin: 7px 6px 0 7px; border-radius: 1px; background: #1c3a22; stroke: none; }
.track-row .mid { width: 53px; padding-top: 3px; color: #fff; font-weight: 500; letter-spacing: -0.1px; }

.msr {
  display: flex;
  margin-top: 2px;
}

.msr b {
  width: 13.5px;
  height: 11.5px;
  background: #484848;
  font-size: 8.5px;
  font-weight: 500;
  line-height: 11.5px;
  text-align: center;
  border-radius: 2px;
}

.msr .r { margin-left: 4px; }
.sel .msr .r { background: #b3122a; }

.volume {
  position: relative;
  width: 80px;
  height: 8px;
  margin-top: 18.7px;
  border-radius: 4px;
  background: #2d302d;
}

.volume i { position: absolute; height: 2px; left: 3px; background: #55e25c; }
.volume .upper { top: 1px; }
.volume .under { top: 4.5px; }
.volume .knob { top: -2px; width: 12px; height: 12px; border: 1px solid #555; border-radius: 50%; background: #8a8c8a; }
.panner { width: 22px; height: 26px; margin: 4px 0 0 5px; stroke: none; }

#arrange {
  width: 906px;
  height: 293px;
  background: #282828;
  stroke: none;
}

/* Editor */
#editor {
  height: 317px;
  margin-top: 3px;
  margin-left: -1px;
  border: 1px solid #6c9bd8;
  border-top-width: 2px;
  background: #4e4e4e;
}

.tabs {
  display: flex;
  height: 20px;
  padding-left: 391px;
  border-bottom: 1px solid #222;
  background: #383838;
}

.tabs span {
  width: 85.3px;
  border-right: 1px solid #2a2a2a;
  color: #fff;
  font-weight: 600;
  letter-spacing: -0.2px;
  line-height: 19px;
  text-align: center;
}

.tabs .active { background: #24508f; }
.tabs .off { color: #888; font-weight: 500; }
#editor .menu { margin-right: 5px; }
#editor .tools { margin-left: 213px; }
#editor .gold-btn { margin-left: 1px; }
#editor .info { width: 84px; height: 13px; margin-left: 157px; border-radius: 2px; background: #2a2a2a; color: #ddd; font-size: 8.7px; text-align: center; }
#editor .snap { margin-left: 7px; }
#editor .s1 { width: 115px; margin-right: 6px; padding-left: 6px; }
#editor .zoomers { margin-left: -1px; }

.roll {
  display: flex;
}

.side {
  width: 185px;
}

.side-head {
  display: flex;
  align-items: center;
  height: 30px;
  padding-left: 45px;
  border-top: 1px solid #222;
  border-bottom: 1px solid #222;
  background: #3c3c3c;
}

.side-head .btns { margin: 0 0 2px 24px; }
.notes-info { width: 66px; margin-left: 1px; margin-right: 21px; line-height: 10px; text-align: center; white-space: nowrap; }
.notes-info b { display: block; color: #fff; font-weight: 600; letter-spacing: -0.25px; }
.notes-info span { color: #aaa; font-size: 7.6px; }

.side-body {
  display: flex;
}

.quant {
  width: 159px;
  padding: 16px 7px 0 10px;
}

.quant h4 { height: 13px; color: #b5b5b5; font-size: 8.8px; font-weight: 500; line-height: 13px; }
.quant .scale { margin-top: 47px; }
.quant .vel { margin-top: 45px; }

.box {
  border-radius: 2px;
  background: #404040;
}

.box.time { padding-bottom: 3px; }

.pick {
  display: grid;
  grid-template-columns: 107px 10px 1fr;
  align-items: center;
  height: 13.5px;
  border: 1px solid #333;
  border-radius: 2px;
  background: #383838;
  color: #fff;
  text-align: center;
}

.scale-pick { grid-template-columns: 31px 10px 66px 10px 1fr; margin-top: 1px; }
.pick .ud { color: #ccc; }
.pick b { font-weight: 600; letter-spacing: -0.1px; }
.pick span { font-size: 9.5px; }
.scale-pick b:nth-of-type(2) { padding-left: 6px; }

.row {
  display: flex;
  align-items: center;
  height: 12px;
  color: #c4c4c4;
}

.row:nth-child(2) { margin-top: 3px; }
.row span { width: 39px; text-align: right; letter-spacing: -0.1px; }
.row b { width: 23px; color: #fff; font-weight: 500; text-align: center; }

.slider {
  position: relative;
  width: 73px;
  height: 2px;
  margin: 0 1px 0 5px;
  background: #2a2a2a;
}

.slider::after {
  content: "";
  position: absolute;
  top: -2.5px;
  left: 12px;
  width: 7px;
  height: 7px;
  border-radius: 50%;
  background: #a2a2a2;
}

.slider.full::after { left: 66px; }
.slider.zero::after { left: 1px; }

.velbox { display: flex; align-items: center; height: 16px; }
.velbox .slider { width: 111px; margin: 0 7px; }
.velbox b { color: #fff; font-weight: 500; }

#keys { width: 26px; height: 244px; stroke: none; }
#roll { width: 938px; height: 274px; background: #222; stroke: none; }

/* Dock */
#dock {
  display: flex;
  align-items: center;
  width: 747px;
  height: 18px;
  margin-left: 267px;
  padding: 0 0 3px 0;
  background: #101010;
}

.app {
  width: 9.8px;
  height: 10px;
  margin: 0 1.43px;
  flex: none;
  stroke: none;
}

.sep { width: 1px; height: 12px; margin: 0 2.4px; background: #444; }
```
FILE: script.js
```js
// ---------- helpers ----------
const rect = (x, y, w, h, fill, rx = 0) =>
  `<rect x="${x}" y="${y}" width="${w}" height="${h}" fill="${fill}" rx="${rx}"/>`;
const text = (x, y, size, fill, str, weight = 400) =>
  `<text x="${x}" y="${y}" font-size="${size}" fill="${fill}" font-weight="${weight}">${str}</text>`;

// Piano roll notes: [start, end, y, colour]
const lime = '#7db53c', green = '#4bab5a', mint = '#3f9f7c', teal = '#3f9493', sea = '#3a7596', blue = '#3c62a6';
const notes = [
  [340, 345, 533.7, teal], [346.7, 570, 536.2, teal], [571, 592, 533.7, blue], [592.5, 616, 536.2, teal],
  [616.5, 840, 533.7, '#42618f'], [840, 865, 536.2, blue], [865, 886, 533.7, '#42618f'], [884.5, 1144, 528, sea],
  [346.5, 351, 560.3, blue], [346, 392, 568.3, lime], [413, 437, 568.3, '#5fae42'], [481, 503, 568.3, lime], [549, 571, 568.3, '#6fb53c'],
  [340, 346, 573.5, green], [392, 413, 579, green], [459, 483, 579, teal], [526, 549, 579, green],
  [340, 345, 587, mint], [369, 415, 592.2, teal], [436.5, 485, 592.2, green], [504.5, 551, 592.2, mint], [572, 595, 592.2, teal],
  [346.5, 351, 600.3, '#9cb9e8'], [346.5, 351, 611, '#7fb4d8'], [369, 484, 611, blue], [503, 592, 611, teal],
  [414.5, 482, 624.3, green], [549, 592, 624.3, mint], [346.5, 456, 643, green], [482, 588, 643, mint],
  [616.5, 620.5, 565.5, sea], [616.5, 663.5, 573.5, '#80a04a'], [684, 728, 573.5, '#5f9c4c'], [752.5, 799, 573.5, '#80a04a'], [819, 864, 573.5, '#5f9c4c'],
  [596, 618, 579, green], [661, 684, 584.2, mint], [729.5, 753.5, 584.2, sea], [796.5, 819, 584.2, teal], [864.5, 888, 584.2, sea],
  [616.5, 620.5, 597.6, '#cfe6f2'], [639, 685, 597.6, teal], [707, 753.5, 597.6, teal], [774, 819, 597.6, mint], [841, 864, 597.6, teal],
  [616.5, 620.5, 616.3, '#cfe6f2'], [640, 753, 616.3, mint], [774, 887, 616.3, sea],
  [685, 751, 629.5, mint], [820, 867.5, 629.5, mint], [616.5, 730, 648.3, mint], [752, 863, 648.3, green],
  [887.5, 891, 560.3, sea], [887, 934, 568.3, lime], [954, 981, 568.3, '#5fae42'], [1022, 1045.5, 568.3, lime], [1090, 1113, 568.3, '#6fb53c'],
  [932, 954, 579, teal], [1000, 1023, 579, teal], [1066.5, 1087.5, 579, green], [1134, 1144, 579, green],
  [910, 955.5, 592.2, mint], [977.5, 1024, 592.2, sea], [1045, 1077.5, 592.2, teal], [1113, 1138.5, 592.2, mint],
  [887.5, 891.5, 600.3, '#9cb9e8'], [887.5, 891, 611, '#cfe6f2'], [909, 1023, 611, mint], [1044.5, 1121, 611, teal],
  [955, 1023, 624.3, green], [1089.5, 1122, 624.3, mint], [887, 997, 643, mint], [1022, 1120, 643, green],
  [1157, 1161, 554.8, '#5058b8'], [1172.5, 1279, 565.5, '#b8d89a'], [1164, 1279, 573.5, '#a8d8d8'], [1160.5, 1279, 587, '#9ee0c4'],
  [1155, 1279, 597.6, '#a4d4e0'], [1157, 1162, 605.6, '#7c80d8'], [1169, 1279, 637.5, '#9cc4d8'], [1157, 1279, 669.5, '#3d7080']
];

// ---------- track headers ----------
// pan is in degrees from centre
const tracks = [
  { name: 'Piano', knob: 51, pan: 0, meter: [28, 29] },
  { name: 'Vn 1', knob: 51, pan: -95, meter: [32, 6] },
  { name: 'Vn 2', knob: 46, pan: -48 },
  { name: 'Va', knob: 51, pan: 48 },
  { name: 'Vc', knob: 51, pan: 95 },
  { name: 'Cb', knob: 51, pan: 0 }
];

function panner(deg) {
  const a = deg * Math.PI / 180;
  const x = 11 + 8.3 * Math.sin(a), y = 12 - 8.3 * Math.cos(a);
  const arc = deg ? `<path d="M11 3.700A8.300 8.300 0 0 ${deg > 0 ? 1 : 0} ${x} ${y}" fill="none" stroke="#5cd964" stroke-width="2"/>` : '';
  return `<svg class="panner" viewBox="0 0 22 26"><path d="M5.500 18.700a8.600 8.600 0 1 1 11 0" fill="none" stroke="#2a2a2a" stroke-width="1.500"/>
    <circle cx="11" cy="12" r="7.300" fill="#adadad"/>${arc}
    <path d="M11 7V11" transform="rotate(${deg} 11 12) translate(0 -2)" stroke="#333"/>
    ${text(3.5, 24.5, 4.5, '#ddd', 'L')}${text(14.5, 24.5, 4.5, '#ddd', 'R')}</svg>`;
}

document.getElementById('track-list').innerHTML = tracks.map((t, i) => `
  <div class="track-row${i ? '' : ' sel'}">
    <div class="num">${i + 1}</div>
    <svg class="badge"><use href="#i-music"/></svg>
    <div class="mid">${t.name}<div class="msr"><b>M</b><b>S</b><b class="r">R</b></div></div>
    <div class="volume">
      ${t.meter ? `<i class="upper" style="width:${t.meter[0]}px"></i><i class="under" style="width:${t.meter[1]}px"></i>` : ''}
      <i class="knob" style="left:${t.knob}px"></i>
    </div>
    ${panner(t.pan)}
  </div>`).join('');

// ---------- arrange area ----------
const gold = '#ab8e28';
let out = `<defs><pattern id="hatch" width="6" height="6" patternUnits="userSpaceOnUse" patternTransform="rotate(45)"><rect width="6" height="6" fill="#2d2d2d"/><rect width="3" height="6" fill="#262626"/></pattern></defs>`;
out += rect(373, 90, 906, 12, 'url(#hatch)') + rect(373, 102, 906, 11, '#222') + rect(419, 90, 448, 11.5, gold) + rect(867, 90, 1, 11.5, '#c9b35a');
for (let x = 379; x < 1279; x += 3) out += rect(x - .5, 107.5, 1.5, 5, '#424242');
for (let i = 1; i < 20; i++) {
  const x = 379 + (i - 1) * 48, inCycle = i > 1 && i < 12;
  out += rect(x - .5, 91.5, 1, 21.5, inCycle ? '#6b5a20' : '#444') + rect(x - .5, 102, 1, 11, '#505050');
  out += rect(x - .5, 114, 1, 196, '#363636');
  out += text(x + 2.5, 98.5, 9, inCycle ? '#2e270c' : '#d8d8d8', i, 500);
}
out += `<path d="M373 92l5 4-5 4z" fill="#777"/>`;
for (let i = 0; i <= 6; i++) out += rect(373, 113 + i * 32.67, 906, 1, '#181818');
out += rect(373, 310, 906, 73, '#272727');

const regions = [['Piano', 427, 859], ['Vn 1', 571, 811], ['Vn 2', 571, 859], ['Va', 571, 859], ['Vc', 571, 859], ['Vc', 571, 859]];
regions.forEach(([name, x1, x2], i) => {
  const y = 114.4 + i * 32.67, w = x2 - x1;
  out += rect(x1 - .5, y - .5, w + 1, 32.2, '#0c0c0c', 2) + rect(x1, y, w, 31, '#b9ffc0', 2) + rect(x1 + 1, y + 12.6, w - 2, 17.4, '#27aa28', 1);
  out += text(x1 + 3.5, y + 8.8, 7.4, '#1d6b28', name);
  if (i) {
    out += rect(606, y + 27, 3, .9, '#b9ffc0');
    if (i > 1) for (let b = 619; b < 830; b += 48) out += rect(b - .5, y + 14.6, 2.5, 1, '#b9ffc0');
  }
});
out += rect(618.5, 161.2, 190.5, 1.8, '#a6f5aa');
// miniature of the piano part, two bar shapes repeated
[7, 7, 8, 7, 7, 7, 8, 7].forEach((bar, k) => {
  const start = bar === 7 ? 346.3 : 616.5, to = 427 + k * 48;
  if (k) out += rect(to - .5, 127, 1, 17, '#1d8420');
  notes.filter(n => n[0] >= start - 1 && n[0] < start + 269 && n[2] > 562).forEach(n => {
    const s = 48 / 270.2;
    out += rect((to + (n[0] - start) * s).toFixed(1), (128.6 + (n[2] - 566) * .127).toFixed(1), ((n[1] - n[0]) * s + .5).toFixed(1), 1.8, '#a6f5aa');
  });
});
out += rect(812, 128, 44, 4.8, '#a6f5aa') + rect(811, 137.3, 45, 1.3, '#a6f5aa') + rect(811, 141.3, 43, 1.3, '#a6f5aa');
// playhead and mouse pointer
out += rect(711, 104, 1.3, 279, '#d8d8d8') + `<path d="M707.500 102.500h8.500v4l-4.200 4.500-4.300-4.500z" fill="#ddd"/>`;
out += `<path d="M453 294v10.500l2.400-2 1.700 3.600 1.600-.8-1.600-3.400 3-.3z" fill="#111" stroke="#ccc" stroke-width=".9"/>`;
document.getElementById('arrange').innerHTML = out;

// ---------- keyboard ----------
const semi = 32.04 / 12;
const isBlack = n => [1, 3, 6, 8, 10].includes(n);
out = rect(314, 457, 26, 244, '#d0d0d0');
// keys used by the selected regions go under the key borders
[[553.7, 26], [571.9, 26], [585.5, 26], [598.6, 26], [603.8, 26], [635.9, 26], [691, 26]].forEach(([y, w]) => {
  out += rect(314, y, w, 3.2, '#5884c4');
});
for (let oct = 0; oct < 8; oct++) {
  const bottom = 478.6 + oct * 32.04;
  for (let k = 0; k < 7; k++) out += rect(314, bottom - k * 4.577, 26, .6, '#6a6a6a');
  for (let n = 0; n < 12; n++) if (isBlack(n)) out += rect(314, bottom - (n + 1) * semi + .3, 12, 2.1, '#0b0b0b');
  if (oct < 7) out += text(332, bottom - .2, 4, '#555', 'C' + (8 - oct));
}
[565.3, 609.3, 614.7].forEach(y => out += rect(314, y, 12, 2.1, '#274f86'));
document.getElementById('keys').innerHTML = out;

// ---------- piano roll ----------
out = rect(340, 427, 938, 15, gold) + rect(340, 442, 938, 15, '#242424') + rect(340, 456.5, 938, 1, '#111');
for (let i = 0, y = 457.2; y < 701; i++, y = 457.2 + i * semi) {
  const n = ((7 - i) % 12 + 12) % 12;
  out += rect(340, y, 938, semi, isBlack(n) ? '#1f1f1f' : '#252525') + rect(340, y, 938, .6, '#191919');
}
for (let i = 0; i < 84; i++) {
  const x = 346.3 + i * 11.26;
  if (x > 1278) break;
  out += rect(x - .5, i % 2 ? 451 : 447, 1, i % 2 ? 5 : 9, '#4c4c4c');
  out += rect(x - .5, 457, 1, 244, i % 2 ? '#262626' : '#333');
}
[7, 8, 9, 10].forEach((bar, i) => {
  const x = 346.5 + i * 270.2;
  out += rect(x - .5, 429, 1, 13, '#5c4d18') + rect(x - .5, 442, 1, 259, bar === 10 ? '#265c2a' : '#3c3c3c');
  out += text(x + 2, 436, 9, '#2c2610', bar);
});
notes.forEach(([a, b, y, c]) => {
  out += rect(a - .5, y - 1.8, b - a + 1, 3.6, '#121212') + rect(a, y - 1, b - a, 2, c);
});
out += rect(594.9, 446, 1.2, 255, '#eee') + `<path d="M591.500 442.500h8v4.500l-4 4-4-4z" fill="#ddd"/>`;
document.getElementById('roll').innerHTML = out;

// ---------- channel strip faders ----------
const marks = [[0, 0], [3, 6], [6, 12], [9, 18], [12, 24], [15, 30], [18, 36], [21, 42], [24, 48], [30, 56], [35, 63], [40, 69], [45, 76], [50, 83], [60, 90]];
document.querySelectorAll('.fader').forEach(f => {
  const l = +f.dataset.l - 2, r = +f.dataset.r - 2, peak = +f.dataset.peak;
  let s = rect(11, 1, 1.2, 91, '#1c1c1c') + rect(29.8, 1, 7, 91, '#272a24');
  marks.forEach(([n, y]) => {
    s += `<text x="27" y="${y + 3.4}" font-size="4.800" fill="#a5a5a5" text-anchor="end">${n}</text>`;
    s += rect(27.8, y + 1.5, 1.5, .6, '#888') + rect(3, y + 1, 7, .6, '#888') + rect(6, y + 4, 4, .5, '#777');
  });
  s += rect(30.3, l, 2.7, 92 - l, '#55dc5c') + rect(33.6, r, 2.7, 92 - r, '#55dc5c') + rect(31, peak, 3, .8, '#4ca050');
  s += rect(5.5, 13, 11.5, 22, '#8d8d8d', 1) + rect(5.5, 13, 11.5, 5, '#a9a9a9', 1) + rect(5.5, 23.5, 11.5, 1.2, '#3c3c3c') + rect(5.5, 28, 11.5, .6, '#bbb') + rect(5.5, 31, 11.5, .6, '#bbb') + rect(2.5, 23.7, 3, .8, '#eee');
  f.innerHTML = s;
});

// ---------- dock ----------
// [shape, base colour, detail colour, detail]; shape: c = circle, s = square, | = separator
const apps = [
  ['s', '#3aa0ea', '#e8f2fa', 'half'], ['c', '#44405c', '#c86ab8', 'dot'], ['c', '#8c9299', '#444', 'tri'], ['c', '#2c8ae0', '#f2f2f2', 'tri'], ['s', '#5a86b8', '#cfdcec', 'bar'],
  ['s', '#8a6238', '#71502d', 'half'], ['s', '#eee', '#d33', 'top'], ['s', '#f6f2dc', '#e8c860', 'top'], ['s', '#f4f4f4', '#bbb', 'bar'], ['s', '#d8e4d0', '#4aa0d8', 'bar'],
  ['c', '#e8a040', '#b84a9c', 'dot'], ['c', '#3f9ef0', '#fff', 'bub'], ['s', '#4fd060', '#fff', 'bub'], ['s', '#e8e4dc', '#e08a30', 'bar'], ['s', '#101010', '#2ca04c', 'bars'],
  ['s', '#101010', '#4ea0e8', 'key'], ['c', '#f4f4f8', '#e8447c', 'note'], ['c', '#ee8a34', '#fff', 'bar'], ['c', '#2a8cf0', '#fff', 'a'], ['s', '#606468', '#2c2c2c', 'dot'],
  ['s', '#b84f90', '#e8c84c', 'top'], ['s', '#c4ccd0', '#4a8a50', 'bar'], ['c', '#c050a0', '#60d080', 'tri'], ['s', '#4c5058', '#c4c8cc', 'dot'], ['s', '#221a10', '#e8a838', 'note'],
  ['s', '#222', '#ddd', 'bar'], ['c', '#1a3c70', '#3c78c0', 'dot'], ['s', '#3c8cd0', '#d03040', 'half'], ['c', '#e86a20', '#5a3ab0', 'dot'], ['c', '#c8142c', '#16080a', 'dot'],
  ['c', '#d8b030', '#4285f4', 'dot'], ['c', '#1e8cc8', '#fff', 'bub'], ['s', '#f0e8e8', '#a01428', 'c'], ['s', '#f0e8e8', '#a01428', 'c'], ['c', '#1b7c8c', '#e0f0f0', 'tri'],
  ['c', '#6a34b8', '#fff', 'a'], ['s', '#16181c', '#b0b4b8', 'bar'], ['s', '#0c3a50', '#2a8ca8', 'ring'], ['c', '#b8b8c0', '#4a3c50', 'dot'], ['s', '#2074d8', '#fff', 'bub'],
  ['c', '#b048e8', '#fff', 'bub'], ['s', '#1090d8', '#fff', 'note'], ['c', '#38c858', '#fff', 'ring'], ['s', '#20c040', '#fff', 'bub'], ['s', '#2cc85c', '#fff', 'bub'],
  ['s', '#5058c8', '#fff', 'bub'], ['s', '#101814', '#28a070', 'a'], ['c', '#222428', '#c8c8c8', 'ring'], ['s', '#a8834c', '#5c4020', 'bar'], ['c', '#111', '#eee', 'play'], ['|'],
  ['s', '#2460b8', '#e8eef8', 'half'], ['s', '#d01c28', '#fff', 'tri'], ['|'],
  ['s', '#50a4cc', '#3c8cb4', 'top'], ['s', '#50a4cc', '#3c8cb4', 'top'], ['s', '#d8181c', '#fff', 'dot'], ['s', '#e86a38', '#f8d0b8', 'top'], ['s', '#20242c', '#e8ecf0', 'bar'], ['s', '#2a2c2e', '#44474a', 'top']
];
const details = {
  half: c => rect(5, 1, 4, 8, c), dot: c => `<circle cx="5" cy="5" r="2.300" fill="${c}"/>`, tri: c => `<path d="M7.500 2 6 6 2.500 8 4 4z" fill="${c}"/>`,
  bar: c => rect(2, 4, 6, 2.5, c), top: c => rect(1, 1, 8, 2.5, c), bub: c => `<ellipse cx="5" cy="4.700" rx="3" ry="2.300" fill="${c}"/><path d="M3 6v2l2-1.500z" fill="${c}"/>`,
  bars: c => rect(1, 6, 2, 3, '#e0a030') + rect(3.2, 4, 1.8, 5, c) + rect(5.2, 1, 1.8, 8, '#3a78d0') + rect(7.2, 3, 1.8, 6, '#d84040'), key: c => rect(1, 1, 8, 3.5, c) + rect(4.5, 4, 1, 4, '#bbb') + rect(2.5, 8, 5, 1, '#bbb'),
  note: c => `<path d="M4 2.500l3.500-.7V7M4 2.500V7.500" fill="none" stroke="${c}"/><circle cx="3.300" cy="7.500" r="1" fill="${c}"/><circle cx="6.800" cy="7" r="1" fill="${c}"/>`,
  a: c => `<path d="M2.500 7.500 5 2.500l2.500 5M3.500 6h3" fill="none" stroke="${c}"/>`, c: c => `<path d="M7 2 3 5l4 3" fill="none" stroke="${c}" stroke-width="2"/>`,
  ring: c => `<circle cx="5" cy="5" r="3" fill="none" stroke="${c}"/>`, play: c => `<circle cx="5" cy="5" r="4.300" fill="none" stroke="#999" stroke-width=".7"/><path d="M4 3v4l3-2z" fill="${c}"/>`
};
document.getElementById('dock').innerHTML = apps.map(([shape, base, col, d]) => shape === '|' ? '<i class="sep"></i>' :
  `<svg class="app" viewBox="0 0 10 10">${shape === 'c' ? `<circle cx="5" cy="5" r="5" fill="${base}"/>` : rect(.3, .3, 9.4, 9.4, base, 1.5)}${details[d](col)}</svg>`).join('');
```
